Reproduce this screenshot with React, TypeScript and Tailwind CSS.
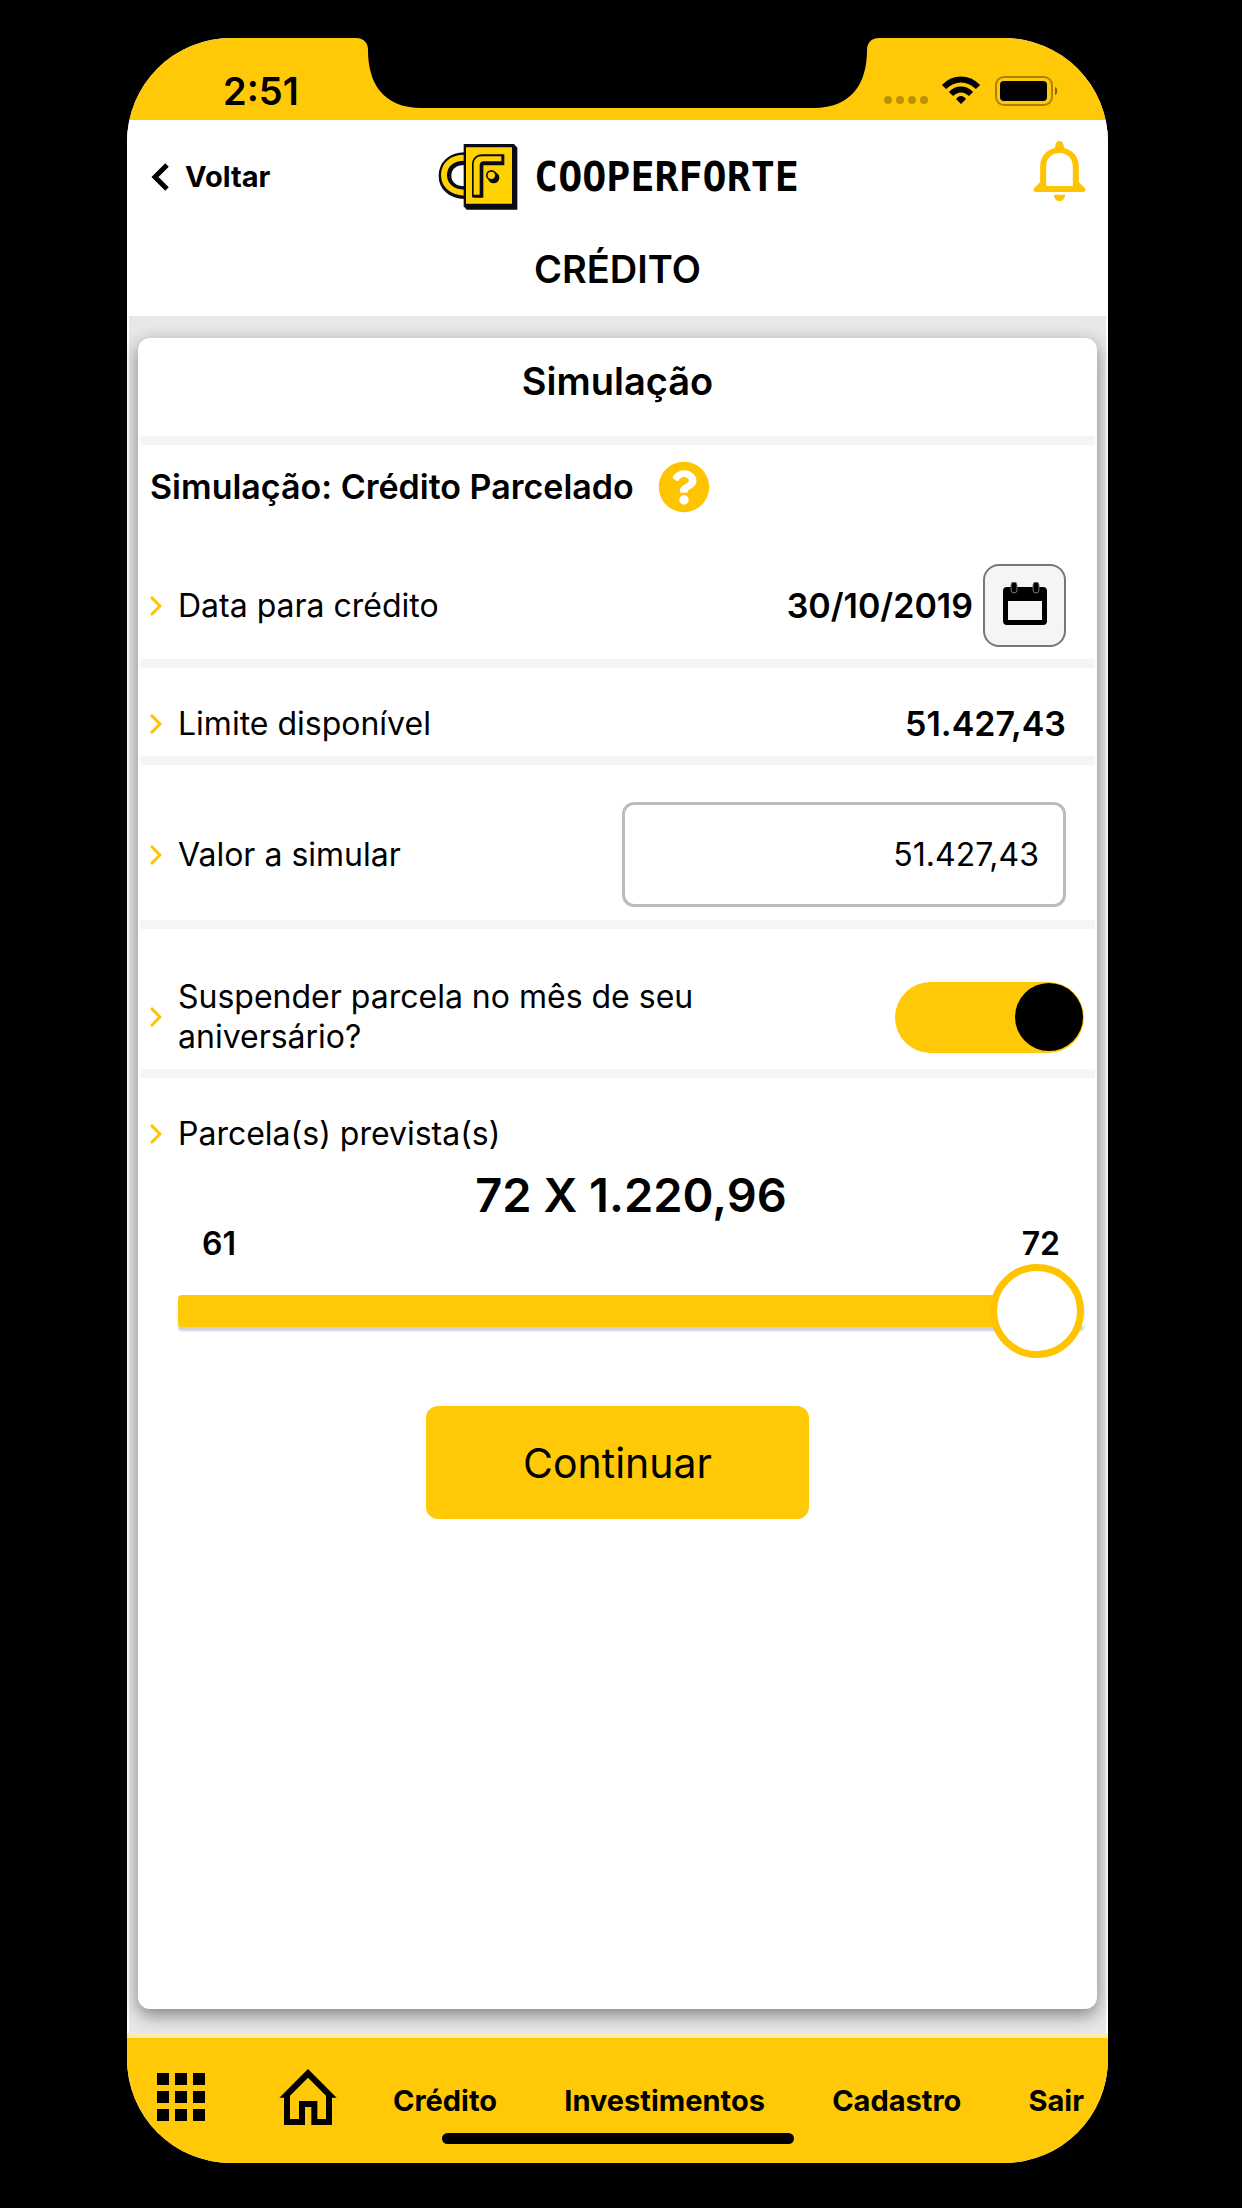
import { useState } from 'react'
import type { ReactNode } from 'react'
import { FaQuestionCircle } from 'react-icons/fa'

const navLinks = [
  { href: '#credito', label: 'Crédito' },
  { href: '#investimentos', label: 'Investimentos' },
  { href: '#cadastro', label: 'Cadastro' },
  { href: '#sair', label: 'Sair' },
]

function Logo() {
  return (
    <svg width="80" height="68" viewBox="50 40 240 204" fill="none" aria-hidden="true">
      <path d="M130 87C92 87 71 110 71 138s21 51 59 51" stroke="#0a0a14" strokeWidth="38" />
      <path d="M130 84C88 84 68 108 68 136s20 51 62 53" stroke="#ffd200" strokeWidth="18" />
      <path d="M127 43h151l10 11v186H136l-9-10z" fill="#0a0a14" />
      <path d="M134 53h138v169H134z" fill="#ffd200" />
      <path d="M152 203v-98c0-17 12-31 30-31h67v33h-63v97h-25z" fill="#0a0a14" />
      <path d="M157 195v-91c0-14 10-24 24-24h59v15h-53c-7 0-12 4-12 12v88z" fill="#ffd200" />
      <circle cx="217" cy="144" r="17" fill="#0a0a14" />
      <circle cx="210" cy="137" r="16" fill="#0a0a14" />
      <circle cx="210" cy="137" r="11" fill="#ffd200" />
    </svg>
  )
}

function BellIcon() {
  return (
    <svg width="53" height="62" viewBox="1240 328 158 186" fill="#ffc400" aria-hidden="true">
      <path
        fillRule="evenodd"
        d="M1319 331c7 0 11 5 12 12l2 9c27 6 44 27 44 56v46l18 19c4 5 2 11-5 11h-142c-7 0-9-6-5-11l18-19v-46c0-29 17-50 44-56l2-9c1-7 5-12 12-12zM1279 466h80v-58c0-25-16-41-40-41s-40 16-40 41z"
      />
      <path d="M1302 492h34c-1 12-8 19-17 19s-16-7-17-19z" />
    </svg>
  )
}

function CalendarIcon() {
  return (
    <svg width="44" height="44" viewBox="0 0 44 44" aria-hidden="true">
      <path
        fillRule="evenodd"
        d="M4 5h36a4 4 0 0 1 4 4v30a4 4 0 0 1-4 4H4a4 4 0 0 1-4-4V9a4 4 0 0 1 4-4zM5 19v19h34V19z"
      />
      <g stroke="#777" strokeWidth="1">
        <rect x="8" y="0" width="6" height="11" rx="3" />
        <rect x="30" y="0" width="6" height="11" rx="3" />
      </g>
    </svg>
  )
}

function Chevron() {
  return (
    <svg className="shrink-0" width="12" height="20" viewBox="0 0 12 20" fill="none" aria-hidden="true">
      <path d="M1 1l9 9-9 9" stroke="#ffc400" strokeWidth="3" />
    </svg>
  )
}

function StatusBar() {
  return (
    <div className="grid h-[82px] grid-cols-[1fr_auto_1fr] bg-[#ffc907]">
      <div className="pt-6 pl-24 text-[38px] leading-[58px] font-semibold">2:51</div>
      <svg width="523" height="70" viewBox="0 0 523 70" aria-hidden="true">
        <path d="M0 0C8 0 12 5 12 12C12 44 26 70 66 70H457C497 70 511 44 511 12C511 5 515 0 523 0Z" />
      </svg>
      <div className="flex items-start justify-end pt-[37px] pr-[50px]">
        <svg width="174" height="32" viewBox="0 0 174 32" fill="none" aria-hidden="true">
          <g fill="#000" fillOpacity="0.28">
            <circle cx="4" cy="25" r="4" />
            <circle cx="16" cy="25" r="4" />
            <circle cx="28" cy="25" r="4" />
            <circle cx="40" cy="25" r="4" />
          </g>
          <path d="M60 12C70 2 84 2 94 12M67 19C73 13 81 13 87 19" stroke="#000" strokeWidth="6" />
          <path d="M77 29l-5-5c3-4 7-4 10 0z" fill="#000" />
          <rect x="112" y="2" width="56" height="28" rx="8" stroke="#000" strokeOpacity="0.35" strokeWidth="2" />
          <rect x="116" y="6" width="47" height="20" rx="4" fill="#000" />
          <path d="M171 12c3 1 3 7 0 8z" fill="#000" fillOpacity="0.5" />
        </svg>
      </div>
    </div>
  )
}

function Header() {
  return (
    <header className="bg-white pb-3">
      <div className="grid h-[114px] grid-cols-[1fr_auto_1fr] items-center pr-[22px] pl-6">
        <a href="#voltar" className="flex items-center gap-4 text-[29px] font-bold">
          <svg width="18" height="28" viewBox="0 0 18 28" fill="none" aria-hidden="true">
            <path d="M16 2L4 14l12 12" stroke="#000" strokeWidth="5" />
          </svg>
          Voltar
        </a>
        <div className="flex items-center gap-4 font-['DejaVu_Sans_Mono',monospace] text-[40px] leading-none font-bold">
          <Logo />
          COOPERFORTE
        </div>
        <button type="button" aria-label="Notificações" className="justify-self-end pb-3">
          <BellIcon />
        </button>
      </div>
      <h1 className="text-center text-[38px] leading-[70px] font-semibold">CRÉDITO</h1>
    </header>
  )
}

function Row({ className, children }: { className: string; children: ReactNode }) {
  return <div className={`flex items-center gap-4 border-b-9 border-[#f5f5f5] pl-[10px] ${className}`}>{children}</div>
}

function Simulation() {
  const [amount, setAmount] = useState('51.427,43')
  const [suspend, setSuspend] = useState(true)
  const [installments, setInstallments] = useState(72)

  return (
    <section className="flex-1 rounded-xl bg-white px-[2px] text-[32px] leading-10 shadow-[0_6px_18px_rgba(0,0,0,0.45)]">
      <h2 className="border-b-9 border-[#f5f5f5] pb-3 text-center text-[38px] leading-[86px] font-semibold">Simulação</h2>
      <div className="flex h-[83px] items-center gap-6 pl-[10px] text-[34px] font-semibold">
        <h3>Simulação: Crédito Parcelado</h3>
        <button type="button" aria-label="Ajuda">
          <FaQuestionCircle size={52} color="#ffc400" />
        </button>
      </div>
      <Row className="pt-9 pr-[29px] pb-3">
        <Chevron />
        <span className="flex-1">Data para crédito</span>
        <span className="flex items-center gap-[10px] text-[34px] font-semibold">
          30/10/2019
          <button
            type="button"
            aria-label="Escolher data"
            className="flex size-[83px] items-center justify-center rounded-2xl border-2 border-[#777] bg-[#f5f5f5] pb-1"
          >
            <CalendarIcon />
          </button>
        </span>
      </Row>
      <Row className="pt-9 pr-[29px] pb-3">
        <Chevron />
        <span className="flex-1">Limite disponível</span>
        <span className="text-[34px] font-semibold">51.427,43</span>
      </Row>
      <Row className="pt-[37px] pr-[29px] pb-[13px]">
        <Chevron />
        <label htmlFor="amount" className="flex-1">
          Valor a simular
        </label>
        <input
          id="amount"
          inputMode="decimal"
          value={amount}
          onChange={(e) => setAmount(e.target.value)}
          className="h-[105px] w-[444px] rounded-xl border-3 border-[#bcbcbc] bg-white px-6 text-right"
        />
      </Row>
      <Row className="pt-12 pr-[11px] pb-3">
        <Chevron />
        <label htmlFor="suspend" className="max-w-[560px] flex-1">
          Suspender parcela no mês de seu aniversário?
        </label>
        <input
          id="suspend"
          type="checkbox"
          role="switch"
          checked={suspend}
          onChange={(e) => setSuspend(e.target.checked)}
          className="ml-auto h-[71px] w-[189px] appearance-none rounded-full bg-gray-300 p-[1px] before:block before:size-[68px] before:rounded-full before:bg-black checked:bg-[#ffc907] checked:before:translate-x-[119px]"
        />
      </Row>
      <div className="flex items-center gap-4 pt-9 pl-[10px]">
        <Chevron />
        <label htmlFor="installments">Parcela(s) prevista(s)</label>
      </div>
      <div className="pr-[11px] pl-[38px] font-semibold">
        <output htmlFor="installments" className="block text-center text-[47px] leading-[82px]">
          {installments} X 1.220,96
        </output>
        <div className="-mt-[10px] flex justify-between pr-6 pl-6 leading-9">
          <span>61</span>
          <span>72</span>
        </div>
        <input
          id="installments"
          type="range"
          min={61}
          max={72}
          value={installments}
          onChange={(e) => setInstallments(Number(e.target.value))}
          className="mt-[2px] block h-[94px] w-full appearance-none bg-transparent [&::-webkit-slider-runnable-track]:h-8 [&::-webkit-slider-runnable-track]:rounded [&::-webkit-slider-runnable-track]:bg-linear-to-r [&::-webkit-slider-runnable-track]:from-[#ffc907] [&::-webkit-slider-runnable-track]:from-95% [&::-webkit-slider-runnable-track]:to-white [&::-webkit-slider-runnable-track]:to-95% [&::-webkit-slider-runnable-track]:shadow-[0_4px_2px_#ccd0d8] [&::-webkit-slider-thumb]:-mt-[31px] [&::-webkit-slider-thumb]:size-[94px] [&::-webkit-slider-thumb]:appearance-none [&::-webkit-slider-thumb]:rounded-full [&::-webkit-slider-thumb]:border-7 [&::-webkit-slider-thumb]:border-[#ffc400] [&::-webkit-slider-thumb]:bg-white"
        />
      </div>
      <div className="flex justify-center py-12">
        <button type="button" className="h-[113px] w-[383px] rounded-xl bg-[#ffc907] text-[41px]">
          Continuar
        </button>
      </div>
    </section>
  )
}

function TabBar() {
  return (
    <footer className="border-t-5 border-[#ffedb0] bg-[#ffc907] pb-[19px]">
      <nav className="flex h-[95px] items-center gap-14 pt-[30px] pr-6 pl-[30px] text-[29px] font-bold">
        <div className="flex items-center gap-[74px] pb-2">
          <button type="button" aria-label="Menu">
            <svg width="48" height="48" viewBox="0 0 48 48" aria-hidden="true">
              {[0, 18, 36].map((y) => [0, 18, 36].map((x) => <rect key={`${x}-${y}`} x={x} y={y} width="12" height="12" />))}
            </svg>
          </button>
          <a href="#inicio" aria-label="Início">
            <svg width="58" height="56" viewBox="476 264 172 168" aria-hidden="true">
              <path
                fillRule="evenodd"
                d="M562 264l86 86h-14v82h-62v-54h-19v54h-63v-82h-14zM562 290l-54 54v70h27v-54h55v54h26v-70z"
              />
            </svg>
          </a>
        </div>
        <div className="flex flex-1 justify-between">
          {navLinks.map(({ href, label }) => (
            <a key={href} href={href}>
              {label}
            </a>
          ))}
        </div>
      </nav>
      <div className="mx-auto h-[11px] w-[352px] rounded-full bg-black" />
    </footer>
  )
}

export default function App() {
  return (
    <div className="flex min-h-screen bg-black pt-[38px] pr-[134px] pb-[45px] pl-[127px] font-[Inter,sans-serif] text-black">
      <div className="flex flex-1 flex-col overflow-hidden rounded-[104px] bg-white">
        <StatusBar />
        <Header />
        <main className="mx-[2px] flex flex-1 flex-col bg-[#e8e8e8] px-[9px] pt-[22px] pb-6">
          <Simulation />
        </main>
        <TabBar />
      </div>
    </div>
  )
}
